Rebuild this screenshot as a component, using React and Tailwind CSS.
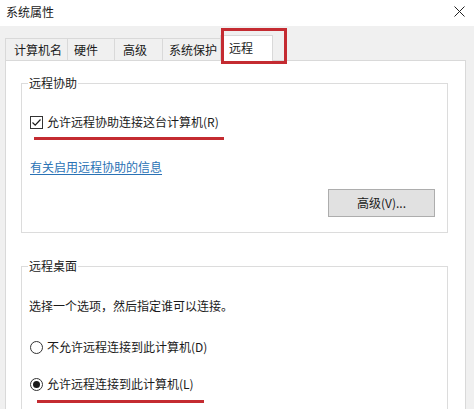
import React from "react";

function Tab({ label, w, pl, selected }) {
  if (selected) {
    return (
      <div
        className={`h-[26px] mb-[-1px] bg-white border-t border-l border-r border-[#d9d9d9] flex items-start pt-[4px] ${w} ${pl}`}
      >
        <span className="leading-[16px]">{label}</span>
      </div>
    );
  }
  return (
    <div
      className={`h-[22px] bg-[#f0f0f0] border-t border-l border-[#d9d9d9] flex items-center ${w} ${pl}`}
    >
      <span className="leading-[16px]">{label}</span>
    </div>
  );
}

function Group({ label, className, children }) {
  return (
    <div className={`relative w-[427px] border border-[#dcdcdc] ${className}`}>
      <span className="absolute -top-[9px] left-[6px] bg-white px-[1px] leading-[16px]">
        {label}
      </span>
      {children}
    </div>
  );
}

function Radio({ checked, label }) {
  return (
    <div className="flex items-center h-[16px] pl-[8px] gap-[4px]">
      <span className="w-[13px] h-[13px] rounded-full border border-[#333333] bg-white flex items-center justify-center shrink-0">
        {checked && <span className="w-[7px] h-[7px] rounded-full bg-[#1a1a1a]" />}
      </span>
      <span className="leading-[16px]">{label}</span>
    </div>
  );
}

export default function App() {
  return (
    <div className="w-[474px] h-[409px] bg-[#f0f0f0] overflow-hidden flex flex-col text-[12px] text-[#1a1a1a] font-['Microsoft_YaHei','Noto_Sans_CJK_SC',sans-serif]">
      {/* title bar */}
      <div className="h-[26px] bg-white flex items-center justify-between pl-[6px] pr-[9px] shrink-0">
        <span className="leading-[16px] -mt-[2px]">系统属性</span>
        <svg width="11" height="11" viewBox="0 0 11 11" className="-mt-[4px]">
          <path d="M0.5 0.5 L10.5 10.5 M10.5 0.5 L0.5 10.5" stroke="#222" strokeWidth="1" />
        </svg>
      </div>

      {/* tabs */}
      <div className="relative z-10 mt-[12px] h-[22px] flex items-end pl-[5px] shrink-0">
        <Tab label="计算机名" w="w-[62px]" pl="pl-[8px]" />
        <Tab label="硬件" w="w-[47px]" pl="pl-[6px]" />
        <Tab label="高级" w="w-[48px]" pl="pl-[8px]" />
        <Tab label="系统保护" w="w-[58px]" pl="pl-[6px]" />
        <Tab label="远程" w="w-[53px]" pl="pl-[8px]" selected />
        <div className="absolute left-[221px] -top-[10px] w-[66px] h-[36px] border-[3px] border-[#c42b31]" />
      </div>

      {/* panel */}
      <div className="ml-[5px] w-[461px] flex-1 bg-white border border-[#d9d9d9] pt-[22px] pl-[15px]">
        <Group label="远程协助" className="flex flex-col pt-[30px] pb-[15px]">
          <div className="flex items-center h-[16px] pl-[8px] gap-[4px]">
            <span className="w-[13px] h-[13px] border border-[#333333] bg-white flex items-center justify-center shrink-0">
              <svg width="11" height="11" viewBox="0 0 11 11">
                <path d="M1.5 5.5 L4.2 8.2 L9.5 2.5" fill="none" stroke="#1a1a1a" strokeWidth="1.2" />
              </svg>
            </span>
            <span className="leading-[16px]">允许远程协助连接这台计算机(R)</span>
          </div>
          <div className="mt-[7px] ml-[12px] w-[190px] h-[3px] bg-[#c42b31]" />
          <div className="mt-[18px] pl-[8px] h-[16px]">
            <span className="leading-[16px] text-[#2a72b5] underline underline-offset-2">
              有关启用远程协助的信息
            </span>
          </div>
          <button className="mt-[15px] self-end mr-[12px] w-[107px] h-[28px] bg-[#e1e1e1] border border-[#adadad] flex items-center justify-center leading-[16px]">
            高级(V)...
          </button>
        </Group>

        <Group label="远程桌面" className="mt-[33px] flex flex-col pt-[31px] pb-[40px]">
          <div className="pl-[7px] h-[16px] leading-[16px]">选择一个选项，然后指定谁可以连接。</div>
          <div className="mt-[25px]">
            <Radio label="不允许远程连接到此计算机(D)" />
          </div>
          <div className="mt-[21px]">
            <Radio checked label="允许远程连接到此计算机(L)" />
          </div>
          <div className="mt-[8px] ml-[15px] w-[167px] h-[3px] bg-[#c42b31]" />
        </Group>
      </div>
    </div>
  );
}
